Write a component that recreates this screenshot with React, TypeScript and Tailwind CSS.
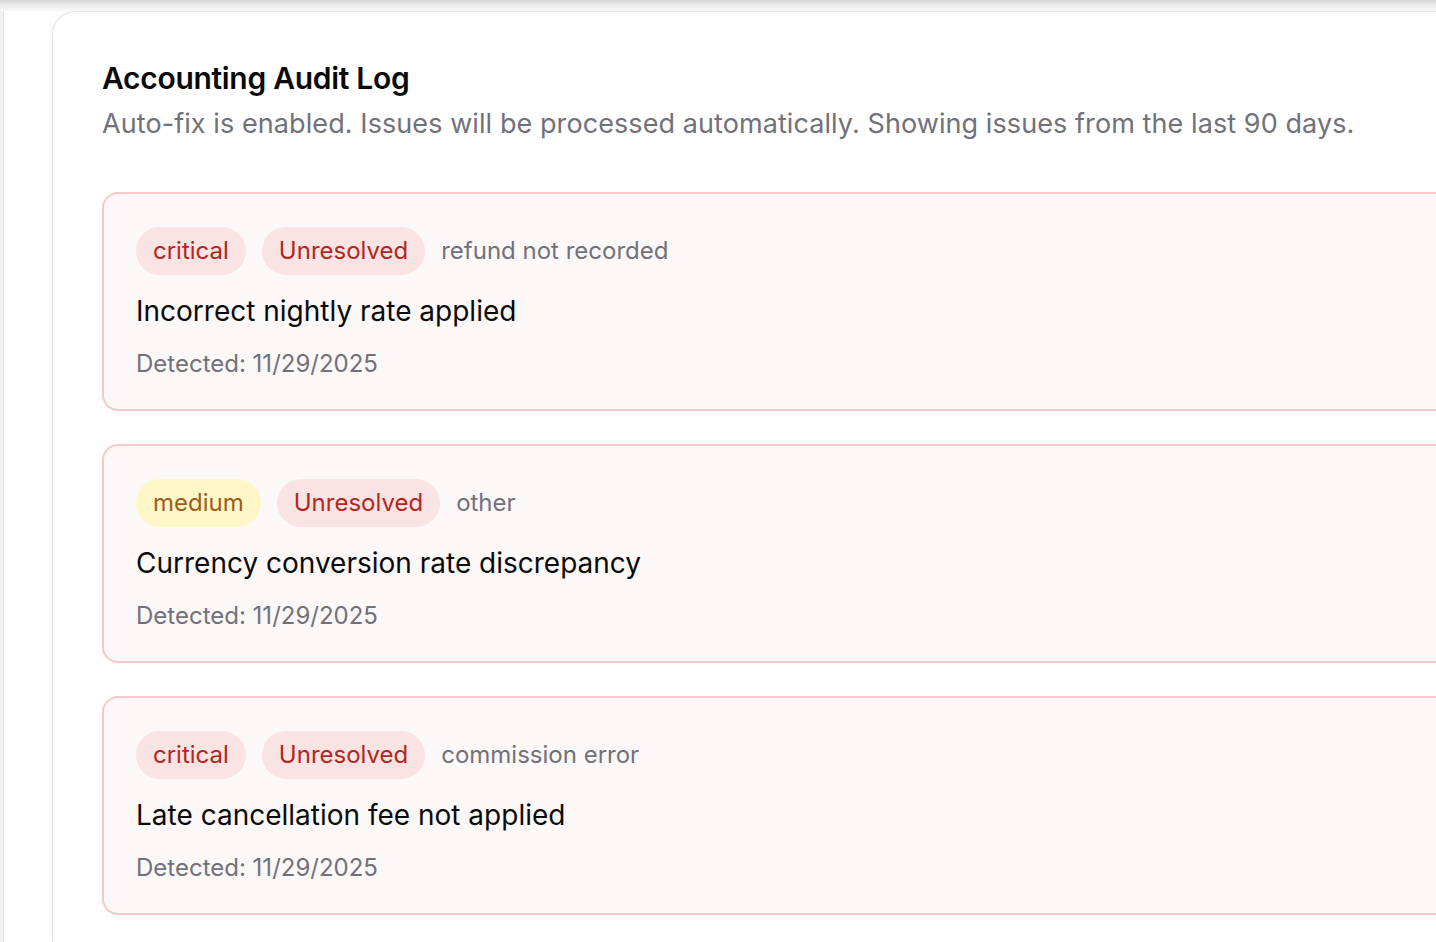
const issues = [
  { severity: "critical", type: "refund not recorded", title: "Incorrect nightly rate applied", detected: "11/29/2025" },
  { severity: "medium", type: "other", title: "Currency conversion rate discrepancy", detected: "11/29/2025" },
  { severity: "critical", type: "commission error", title: "Late cancellation fee not applied", detected: "11/29/2025" },
];

function SeverityBadge({ severity }: { severity: string }) {
  const cls =
    severity === "critical"
      ? "bg-[#fae3e3] text-[#b3261e]"
      : "bg-[#fdf7c8] text-[#a15c1a]";
  return <span className={`inline-flex items-center h-[48px] px-[17px] rounded-full text-[24px] ${cls}`}>{severity}</span>;
}

export default function App() {
  return (
    <div
      className="relative w-full h-[942px] overflow-hidden bg-white flex"
      style={{ fontFamily: "Inter, 'Noto Sans', sans-serif" }}
    >
      {/* top shadow band */}
      <div className="absolute top-0 left-0 right-0 h-[11px] bg-gradient-to-b from-[#d6d6d6] via-[#ececec] to-[#f8f8f8]" />

      {/* left rail */}
      <div className="w-[4px] shrink-0 bg-[#f1f1f1] border-r border-[#e2e2e2]" />

      <div className="flex-1 pl-[48px] pt-[11px]">
        <div className="h-full bg-white border-l border-t border-[#e3e3e3] rounded-tl-[24px] shadow-[0_0_6px_rgba(0,0,0,0.06)] pl-[49px] pt-[46px]">
          <h1 className="text-[30px] leading-[40px] font-semibold tracking-[-0.01em] text-[#0a0a0a]">Accounting Audit Log</h1>
          <p className="mt-[8px] text-[27px] leading-[36px] tracking-[0.003em] text-[#71717a] whitespace-nowrap">
            Auto-fix is enabled. Issues will be processed automatically. Showing issues from the last 90 days.
          </p>

          <div className="mt-[50px] flex flex-col gap-[33px] -mr-[40px]">
            {issues.map((issue, i) => (
              <div
                key={i}
                className="border-2 border-[#f5c9c9] bg-[#fdf8f8] rounded-[16px] pl-[32px] pt-[33px] pb-[29px]"
              >
                <div className="flex items-center gap-[16px]">
                  <SeverityBadge severity={issue.severity} />
                  <span className="inline-flex items-center h-[48px] px-[17px] rounded-full text-[24px] bg-[#fae3e3] text-[#b3261e]">
                    Unresolved
                  </span>
                  <span className="text-[24px] text-[#71717a]">{issue.type}</span>
                </div>
                <div className="mt-[18px] text-[28px] leading-[36px] text-[#0a0a0a]">{issue.title}</div>
                <div className="mt-[19px] text-[24px] leading-[32px] text-[#71717a]">Detected: {issue.detected}</div>
              </div>
            ))}
          </div>
        </div>
      </div>
    </div>
  );
}
